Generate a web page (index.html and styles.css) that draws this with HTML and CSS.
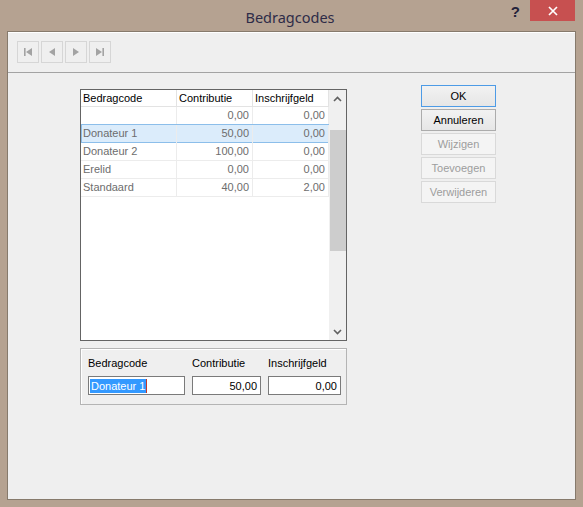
FILE: index.html
```html
<!DOCTYPE html>
<html>
<head>
<meta charset="utf-8">
<link rel="stylesheet" href="styles.css">
</head>
<body>
<div class="window">
  <div class="titlebar">
    <div></div>
    <div class="title">Bedragcodes</div>
    <div class="tb-right">
      <span class="help">?</span>
      <span class="close"><svg width="10" height="10" viewBox="0 0 10 10"><path d="M1 1 L9 9 M9 1 L1 9" stroke="#fff" stroke-width="1.7" fill="none"/></svg></span>
    </div>
  </div>
  <div class="client">
    <div class="toolbar">
      <div class="navbtn"><svg width="10" height="10" viewBox="0 0 10 10"><rect x="1" y="1" width="1.6" height="8" fill="#a3a3a3"/><path d="M9 1 L3 5 L9 9Z" fill="#a3a3a3"/></svg></div>
      <div class="navbtn"><svg width="10" height="10" viewBox="0 0 10 10"><path d="M8 1 L2 5 L8 9Z" fill="#a3a3a3"/></svg></div>
      <div class="navbtn"><svg width="10" height="10" viewBox="0 0 10 10"><path d="M2 1 L8 5 L2 9Z" fill="#a3a3a3"/></svg></div>
      <div class="navbtn"><svg width="10" height="10" viewBox="0 0 10 10"><path d="M1 1 L7 5 L1 9Z" fill="#a3a3a3"/><rect x="7.4" y="1" width="1.6" height="8" fill="#a3a3a3"/></svg></div>
    </div>
    <div class="main">
      <div class="leftcol">
        <div class="list">
          <div class="grid">
            <div class="row head"><div class="c c1">Bedragcode</div><div class="c c2">Contributie</div><div class="c c3">Inschrijfgeld</div></div>
            <div class="row"><div class="c c1"></div><div class="c c2 num">0,00</div><div class="c c3 num">0,00</div></div>
            <div class="row sel"><div class="c c1">Donateur 1</div><div class="c c2 num">50,00</div><div class="c c3 num">0,00</div></div>
            <div class="row"><div class="c c1">Donateur 2</div><div class="c c2 num">100,00</div><div class="c c3 num">0,00</div></div>
            <div class="row"><div class="c c1">Erelid</div><div class="c c2 num">0,00</div><div class="c c3 num">0,00</div></div>
            <div class="row"><div class="c c1">Standaard</div><div class="c c2 num">40,00</div><div class="c c3 num">2,00</div></div>
          </div>
          <div class="vscroll">
            <div class="arrow"><svg width="9" height="6" viewBox="0 0 9 6"><polyline points="1,5 4.5,1.5 8,5" fill="none" stroke="#606060" stroke-width="1.6"/></svg></div>
            <div class="track"><div class="thumb"></div></div>
            <div class="arrow"><svg width="9" height="6" viewBox="0 0 9 6"><polyline points="1,1 4.5,4.5 8,1" fill="none" stroke="#606060" stroke-width="1.6"/></svg></div>
          </div>
        </div>
        <div class="group">
          <div class="lbl">Bedragcode</div>
          <div class="lbl">Contributie</div>
          <div class="lbl">Inschrijfgeld</div>
          <div class="field"><span class="hl">Donateur 1</span><span class="caret"></span></div>
          <div class="field right">50,00</div>
          <div class="field right">0,00</div>
        </div>
      </div>
      <div class="buttons">
        <div class="btn default">OK</div>
        <div class="btn">Annuleren</div>
        <div class="btn disabled">Wijzigen</div>
        <div class="btn disabled">Toevoegen</div>
        <div class="btn disabled">Verwijderen</div>
      </div>
    </div>
  </div>
</div>
</body>
</html>
```
FILE: styles.css
```css
* { box-sizing: border-box; }
html, body { margin: 0; padding: 0; }
body {
  width: 583px;
  height: 507px;
  overflow: hidden;
  background: #b5a291;
  font-family: "Liberation Sans", Arial, sans-serif;
  font-size: 11px;
  color: #000;
}
.window {
  display: flex;
  flex-direction: column;
  height: 507px;
}
.titlebar {
  height: 31px;
  flex: none;
  display: grid;
  grid-template-columns: 1fr auto 1fr;
  align-items: start;
}
.title {
  font-family: "Noto Sans", "Open Sans", sans-serif;
  font-size: 14.5px;
  color: #2e2c48;
  line-height: 29px;
  padding-top: 3px;
  margin-left: -3px;
}
.tb-right {
  display: flex;
  justify-content: flex-end;
  align-items: flex-start;
  padding-right: 8px;
}
.help {
  font-family: "Liberation Sans", Arial, sans-serif;
  font-weight: bold;
  font-size: 15px;
  color: #23223a;
  line-height: 24px;
  margin-right: 10px;
}
.close {
  width: 45px;
  height: 21px;
  background: #c75050;
  display: flex;
  align-items: center;
  justify-content: center;
}
.client {
  flex: 1;
  margin: 0 7px 7px 7px;
  border: 1px solid #867a6c;
  background: #efefef;
  display: flex;
  flex-direction: column;
}
.toolbar {
  height: 41px;
  flex: none;
  border-top: 1px solid #ffffff;
  border-bottom: 1px solid #a3a3a3;
  padding: 8px 0 0 9px;
  display: flex;
  gap: 2px;
  align-items: flex-start;
}
.navbtn {
  width: 22px;
  height: 22px;
  border: 1px solid #d6d6d6;
  display: flex;
  align-items: center;
  justify-content: center;
}
.main {
  display: flex;
  align-items: flex-start;
  padding-left: 72px;
}
.leftcol {
  margin-top: 16px;
  width: 267px;
  display: flex;
  flex-direction: column;
}
.list {
  height: 252px;
  border: 1px solid #646464;
  background: #fff;
  display: flex;
}
.grid {
  width: 248px;
}
.row {
  display: flex;
  height: 18px;
  border-bottom: 1px solid #ececec;
  color: #6d6d6d;
}
.row.head {
  height: 17px;
  border-bottom-color: #e3e3e3;
  color: #000;
}
.row.sel {
  background: #dbecfb;
  box-shadow: inset 0 0 0 1px #8cbeea;
  margin-top: -1px;
  height: 19px;
  border-bottom: none;
  padding-top: 1px;
}
.c {
  border-right: 1px solid #ececec;
  padding: 0 2px;
  line-height: 17px;
  white-space: nowrap;
  overflow: hidden;
}
.head .c { border-right-color: #e3e3e3; line-height: 16px; }
.c1 { width: 96px; }
.c2 { width: 76px; }
.c3 { width: 76px; }
.num { text-align: right; padding-right: 3px; }
.vscroll {
  width: 17px;
  background: #f0f0f0;
  display: flex;
  flex-direction: column;
}
.arrow {
  height: 17px;
  display: flex;
  align-items: center;
  justify-content: center;
  flex: none;
}
.track {
  flex: 1;
  padding-left: 1px;
}
.thumb {
  margin-top: 23px;
  height: 121px;
  background: #cdcdcd;
}
.group {
  margin-top: 7px;
  height: 57px;
  border: 1px solid #b4b4b4;
  box-shadow: inset 1px 1px 0 #ffffff;
  display: grid;
  grid-template-columns: 97px 69px 73px;
  grid-template-rows: 14px 19px;
  align-content: start;
  column-gap: 7px;
  row-gap: 6px;
  padding: 7px 0 0 7px;
}
.lbl {
  line-height: 14px;
  color: #000;
}
.field {
  height: 19px;
  border: 1px solid #7a7a7a;
  background: #fff;
  line-height: 15px;
  padding: 1px 3px 0 1px;
  display: flex;
  align-items: center;
}
.field.right { justify-content: flex-end; }
.hl {
  background: #3399ff;
  color: #fff;
  line-height: 14px;
  padding: 0 1px;
}
.caret {
  width: 1px;
  height: 14px;
  background: #c0392b;
}
.buttons {
  margin-top: 12px;
  margin-left: 74px;
  display: flex;
  flex-direction: column;
  gap: 2px;
}
.btn {
  width: 75px;
  height: 22px;
  border: 1px solid #acacac;
  background: linear-gradient(#f2f2f2, #e6e6e6);
  display: flex;
  align-items: center;
  justify-content: center;
  color: #000;
}
.btn.default {
  border-color: #4d9be6;
}
.btn.disabled {
  border-color: #d9d9d9;
  background: #f4f4f4;
  color: #9d9d9d;
}
```
